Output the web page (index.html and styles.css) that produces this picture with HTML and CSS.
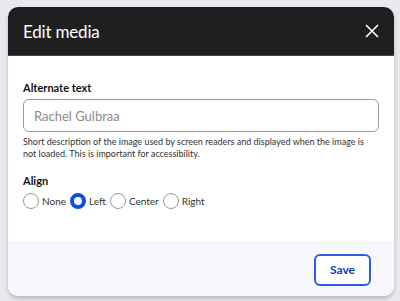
FILE: index.html
```html
<!DOCTYPE html>
<html lang="en">
<head>
  <meta charset="UTF-8" />
  <meta name="viewport" content="width=device-width, initial-scale=1.0">
  <title>Edit media</title>
  <link rel="stylesheet" href="styles.css">
</head>
<body>
  <div class="dialog">
    <div class="dialog-head">
      <h1>Edit media</h1>
      <button class="close" aria-label="Close">
        <svg width="14" height="14" viewBox="0 0 14 14"><path d="M1 1L13 13M13 1L1 13" stroke="#fff" stroke-width="1.6" fill="none"/></svg>
      </button>
    </div>
    <div class="dialog-body">
      <label class="field-label" for="alt">Alternate text</label>
      <input type="text" id="alt" class="text-input" placeholder="Rachel Gulbraa">
      <p class="help">Short description of the image used by screen readers and displayed when the image is not loaded. This is important for accessibility.</p>
      <div class="field-label">Align</div>
      <div class="radios">
        <label class="radio"><span class="dot"></span>None</label>
        <label class="radio"><span class="dot checked"></span>Left</label>
        <label class="radio"><span class="dot"></span>Center</label>
        <label class="radio"><span class="dot"></span>Right</label>
      </div>
    </div>
    <div class="dialog-foot">
      <button class="save">Save</button>
    </div>
  </div>
</body>
</html>
```

FILE: styles.css
```css
body { margin: 0; padding: 7px 6px 7px 8px; background: #e8e9ee; font-family: Lato, "Liberation Sans", sans-serif; color: #222; }
.dialog { background: #fff; border-radius: 10px; overflow: hidden; box-shadow: 0 3px 4px rgba(0,0,0,0.2); }
.dialog-head { background: #1f1f1f; height: 48px; display: flex; align-items: center; justify-content: space-between; padding: 0 15px; border-bottom: 1px solid #444; }
.dialog-head h1 { margin: 0; font-size: 17px; font-weight: 400; letter-spacing: -0.2px; color: #fff; }
.close { background: none; border: none; padding: 0; width: 14px; height: 14px; display: flex; }
.dialog-body { padding: 25px 15px 33px; }
.field-label { display: block; font-size: 11px; font-weight: 700; color: #111; }
.text-input { display: block; box-sizing: border-box; width: 100%; height: 33px; margin-top: 5px; padding: 0 10px; border: 1px solid #9a9a9a; border-radius: 6px; font: inherit; font-size: 13px; }
.text-input::placeholder { color: #8a8a8a; }
.help { margin: 4px 0 14px; font-size: 9px; line-height: 12px; color: #333; }
.radios { display: flex; align-items: center; margin-top: 6px; font-size: 10px; color: #333; }
.radio { display: flex; align-items: center; gap: 3px; margin-right: 4px; }
.dot { box-sizing: border-box; width: 16px; height: 16px; border-radius: 50%; border: 1px solid #999; background: #fff; }
.dot.checked { border: 4.5px solid #0b4ee0; }
.dialog-foot { background: #f8f8fc; border-top: 1px solid #ececf2; height: 53px; display: flex; align-items: center; justify-content: flex-end; padding: 0 23px; }
.save { width: 57px; height: 32px; border: 2px solid #2e5ce6; border-radius: 6px; background: #fff; color: #0a3bc0; font: inherit; font-size: 12px; font-weight: 700; }
```
